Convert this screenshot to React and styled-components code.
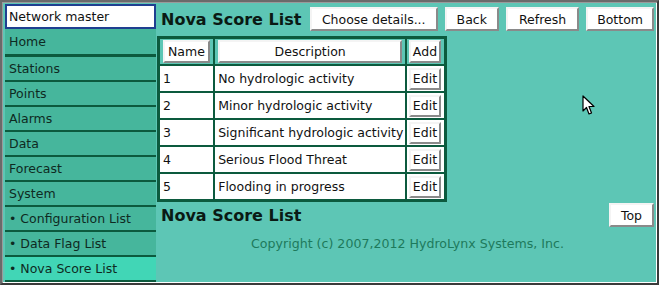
import React from "react";
import styled, { createGlobalStyle } from "styled-components";

const GlobalStyle = createGlobalStyle`
  html, body { margin: 0; padding: 0; background: #5dc6b5; }
  body { font-family: "DejaVu Sans", Verdana, sans-serif; }
`;

const Frame = styled.div`
  position: relative;
  box-sizing: border-box;
  width: 659px;
  height: 285px;
  border-style: solid;
  border-width: 2px;
  border-color: #6a6a6a #3a3a3a #3a3a3a #6a6a6a;
  box-shadow: inset 1px 1px 0 #9a9a9a, inset -1px -1px 0 #ffffff;
  background: #5dc6b5;
  display: flex;
  padding: 2px 3px 0 3px;
  overflow: hidden;
`;

const Sidebar = styled.div`
  width: 151px;
  flex: none;
  display: flex;
  flex-direction: column;
`;

const SiteBox = styled.div`
  box-sizing: border-box;
  height: 25px;
  background: #fff;
  border: 2px solid #1f3f90;
  font-size: 12.5px;
  padding: 3px 0 0 2px;
  color: #111;
`;

const NavItem = styled.div`
  box-sizing: border-box;
  flex: none;
  height: ${p => (p.$first ? "28px" : "25px")};
  background: ${p => (p.$active ? "#41d6b6" : "#46b69c")};
  border-bottom: ${p => (p.$first ? "3px" : "2px")} solid #0c5a3e;
  font-size: 12.5px;
  color: #0e2a22;
  padding: ${p => (p.$first ? "5px 0 0 4px" : "4px 0 0 4px")};
  white-space: nowrap;
`;

const Main = styled.div`
  flex: 1;
  min-width: 0;
  display: flex;
  flex-direction: column;
  padding-left: 1px;
`;

const TitleRow = styled.div`
  display: flex;
  align-items: center;
  height: 28px;
  margin-top: 1px;
  margin-bottom: 3px;
`;

const Title = styled.div`
  font-size: 16px;
  font-weight: bold;
  color: #0a1a14;
  padding-left: 4px;
  flex: 1;
  white-space: nowrap;
`;

const Button = styled.button`
  font-family: "DejaVu Sans", Verdana, sans-serif;
  font-size: 12.5px;
  color: #111;
  background: #fff;
  border: 2px solid;
  border-color: #f4f4f4 #8a8a8a #8a8a8a #f4f4f4;
  height: ${p => p.$h || 24}px;
  padding: 0 ${p => p.$px ?? 10}px;
  width: ${p => (p.$w ? p.$w + "px" : "auto")};
  margin-left: ${p => p.$ml ?? 7}px;
  cursor: default;
  box-sizing: border-box;
  flex: none;
  white-space: nowrap;
`;

const Table = styled.table`
  border-collapse: separate;
  border-spacing: 2px;
  background: #0c5a3e;
  border: 1px solid #0c5a3e;
  width: 290px;
  font-size: 12.5px;
`;

const Cell = styled.td`
  background: ${p => (p.$head ? "#5dc6b5" : "#fff")};
  height: 25px;
  padding: 0 ${p => (p.$pr ? "1px" : "0")} 0 ${p => (p.$pl ?? 3)}px;
  box-sizing: border-box;
  color: #111;
  white-space: nowrap;
  width: ${p => p.$w}px;
`;

const Footer = styled.div`
  display: flex;
  align-items: center;
  height: 26px;
`;

const Copyright = styled.div`
  text-align: center;
  font-size: 12.6px;
  color: #1d7a5c;
  margin-top: 8px;
  padding-left: 4px;
`;

const Cursor = styled.svg`
  position: absolute;
  left: 580px;
  top: 93px;
`;

const nav = ["Stations", "Points", "Alarms", "Data", "Forecast", "System", "• Configuration List", "• Data Flag List", "• Nova Score List"];

const rows = [
  ["1", "No hydrologic activity"],
  ["2", "Minor hydrologic activity"],
  ["3", "Significant hydrologic activity"],
  ["4", "Serious Flood Threat"],
  ["5", "Flooding in progress"],
];

export default function App() {
  return (
    <>
      <GlobalStyle />
      <Frame>
        <Sidebar>
          <SiteBox>Network master</SiteBox>
          <NavItem $first>Home</NavItem>
          {nav.map((n, i) => (
            <NavItem key={n} $active={i === nav.length - 1}>{n}</NavItem>
          ))}
        </Sidebar>
        <Main>
          <TitleRow>
            <Title>Nova Score List</Title>
            <Button $px={10}>Choose details...</Button>
            <Button $px={10}>Back</Button>
            <Button $px={11}>Refresh</Button>
            <Button $px={9}>Bottom</Button>
          </TitleRow>
          <Table>
            <tbody>
              <tr>
                <Cell $head $w={53}><Button $ml={0} $px={3} $h={23}>Name</Button></Cell>
                <Cell $head $w={189}><Button $ml={0} $w={184} $h={23}>Description</Button></Cell>
                <Cell $head $w={37} $pl={2} $pr><Button $ml={0} $px={2} $h={23}>Add</Button></Cell>
              </tr>
              {rows.map(([n, d]) => (
                <tr key={n}>
                  <Cell $w={53}>{n}</Cell>
                  <Cell $w={189}>{d}</Cell>
                  <Cell $w={37} $pl={2} $pr><Button $ml={0} $px={2} $h={22}>Edit</Button></Cell>
                </tr>
              ))}
            </tbody>
          </Table>
          <Footer>
            <Title>Nova Score List</Title>
            <Button $px={10}>Top</Button>
          </Footer>
          <Copyright>Copyright (c) 2007,2012 HydroLynx Systems, Inc.</Copyright>
        </Main>
        <Cursor width="13" height="21" viewBox="0 0 13 21">
          <path d="M1 1 L1 16 L4.5 12.5 L7 19 L9.5 18 L7 11.5 L12 11.5 Z" fill="#fff" stroke="#000" strokeWidth="1.2" strokeLinejoin="round" />
        </Cursor>
      </Frame>
    </>
  );
}
